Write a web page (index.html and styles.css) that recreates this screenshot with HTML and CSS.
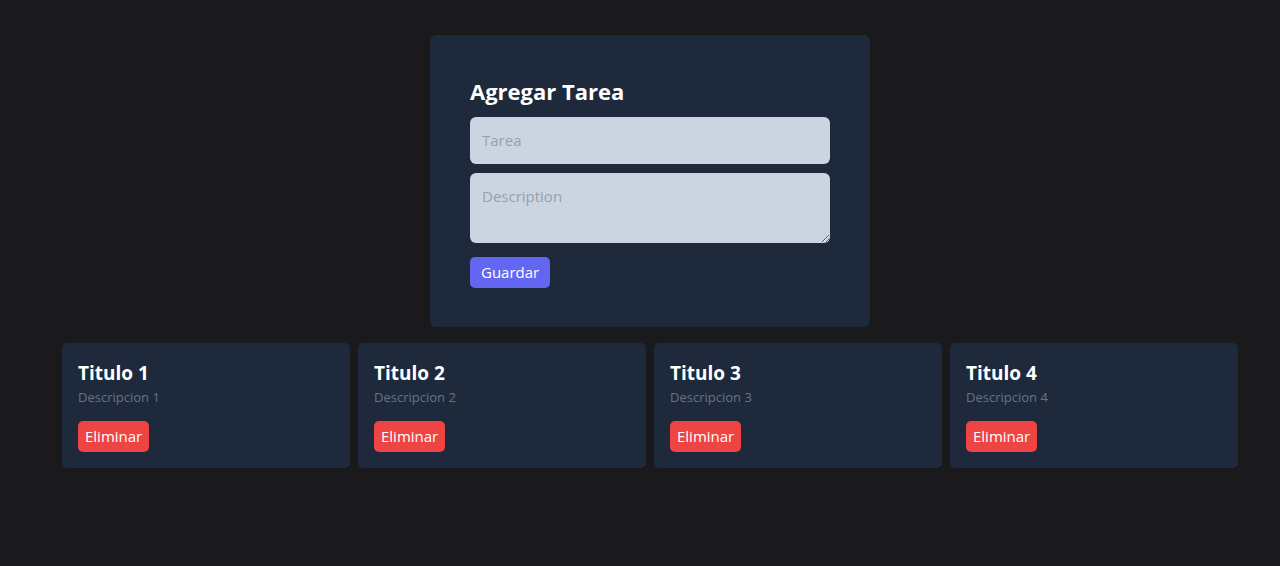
FILE: index.html
```html
<!DOCTYPE html>
<html lang="es">
<head>
<meta charset="utf-8">
<title>Tareas</title>
<link rel="stylesheet" href="styles.css">
</head>
<body>
<main class="container">
  <form class="form-card">
    <h1 class="form-title">Agregar Tarea</h1>
    <input class="field" type="text" placeholder="Tarea">
    <textarea class="field field-area" placeholder="Description"></textarea>
    <button class="btn btn-primary" type="button">Guardar</button>
  </form>
  <section class="task-grid">
    <div class="task-card">
      <h2 class="task-title">Titulo 1</h2>
      <p class="task-desc">Descripcion 1</p>
      <button class="btn btn-danger" type="button">Eliminar</button>
    </div>
    <div class="task-card">
      <h2 class="task-title">Titulo 2</h2>
      <p class="task-desc">Descripcion 2</p>
      <button class="btn btn-danger" type="button">Eliminar</button>
    </div>
    <div class="task-card">
      <h2 class="task-title">Titulo 3</h2>
      <p class="task-desc">Descripcion 3</p>
      <button class="btn btn-danger" type="button">Eliminar</button>
    </div>
    <div class="task-card">
      <h2 class="task-title">Titulo 4</h2>
      <p class="task-desc">Descripcion 4</p>
      <button class="btn btn-danger" type="button">Eliminar</button>
    </div>
  </section>
</main>
</body>
</html>
```
FILE: styles.css
```css
* { box-sizing: border-box; }
html, body {
  margin: 0;
  background: #1a1a1c;
  font-family: "Open Sans", "Noto Sans", sans-serif;
  color: #fff;
}
.container {
  width: 1176px;
  margin-left: 62px;
  padding-top: 35px;
  display: flex;
  flex-direction: column;
  align-items: center;
  gap: 16px;
}
.form-card {
  width: 440px;
  background: #1e293b;
  border-radius: 6px;
  padding: 40px 40px 39px;
  display: flex;
  flex-direction: column;
  align-items: flex-start;
}
.form-title {
  margin: 0 0 10px;
  font-size: 22px;
  line-height: 32px;
  font-weight: 700;
  letter-spacing: 0;
}
.field {
  width: 100%;
  background: #cbd5e1;
  border: 0;
  border-radius: 6px;
  padding: 11px 12px;
  font-family: inherit;
  font-size: 15px;
  line-height: 25px;
  color: #1e293b;
  margin: 0 0 9px;
  outline: none;
}
.field::placeholder { color: #94a0b0; }
.field-area {
  height: 70px;
  resize: vertical;
  margin-bottom: 14px;
  display: block;
}
.btn {
  border: 0;
  border-radius: 5px;
  color: #fff;
  font-family: inherit;
  font-size: 15px;
  line-height: 23px;
  padding: 4px 11px;
  cursor: pointer;
}
.btn-primary { background: #6366f1; }
.btn-danger { background: #ef4444; padding: 4px 7px; }
.task-grid {
  width: 100%;
  display: grid;
  grid-template-columns: repeat(4, 1fr);
  gap: 8px;
}
.task-card {
  background: #1e293b;
  border-radius: 5px;
  padding: 16px;
  display: flex;
  flex-direction: column;
  align-items: flex-start;
}
.task-title {
  margin: 0;
  font-size: 19px;
  line-height: 28px;
  font-weight: 700;
}
.task-desc {
  margin: 0 0 14px;
  font-size: 13px;
  line-height: 20px;
  color: #64748b;
}
```
